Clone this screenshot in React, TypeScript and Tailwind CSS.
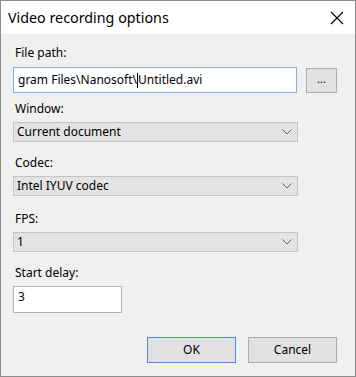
import React from "react";

const font = { fontFamily: '"Noto Sans", "Segoe UI", sans-serif' };

function Chevron() {
  return (
    <svg width="10" height="6" viewBox="0 0 10 6" className="shrink-0">
      <path d="M0.5 0.5 L5 5 L9.5 0.5" fill="none" stroke="#606060" strokeWidth="1" />
    </svg>
  );
}

function Select({ value }: { value: string }) {
  return (
    <div className="w-[285px] h-[20px] bg-[#e3e3e3] border border-[#c4c4c4] flex items-center justify-between pl-[3px] pr-[5px]">
      <span className="text-[12px] leading-[16px] text-black">{value}</span>
      <Chevron />
    </div>
  );
}

export default function App() {
  return (
    <div
      className="w-[356px] h-[377px] border border-[#8c8c8c] flex flex-col bg-[#f0f0f0] text-black"
      style={font}
    >
      <div className="h-[33px] bg-white flex items-center justify-between pl-[7px] pr-[11px] shrink-0">
        <span className="text-[14.3px] leading-[20px]">Video recording options</span>
        <svg width="14" height="14" viewBox="0 0 14 14">
          <path d="M1 1 L13 13 M13 1 L1 13" stroke="#000" strokeWidth="1.1" />
        </svg>
      </div>
      <div className="flex-1 flex flex-col pl-[12px] pr-[18px]">
        <div className="mt-[11px] text-[12px] leading-[16px] pl-[2px]">File path:</div>
        <div className="mt-[6px] flex items-center gap-[9px]">
          <div className="w-[285px] h-[26px] bg-white border border-[#7ab0e5] flex items-center pl-[4px] text-[12px] leading-[16px] whitespace-nowrap overflow-hidden">
            <span>gram Files\Nanosoft\</span>
            <span className="inline-block w-px h-[15px] bg-black" />
            <span>Untitled.avi</span>
          </div>
          <div className="w-[31px] h-[25px] bg-[#e1e1e1] border border-[#adadad] flex items-center justify-center text-[11px] leading-[14px] pb-[2px]">
            ...
          </div>
        </div>
        <div className="mt-[8px] text-[12px] leading-[16px] pl-[2px]">Window:</div>
        <div className="mt-[5px]">
          <Select value="Current document" />
        </div>
        <div className="mt-[13px] text-[12px] leading-[16px] pl-[2px]">Codec:</div>
        <div className="mt-[5px]">
          <Select value="Intel IYUV codec" />
        </div>
        <div className="mt-[15px] text-[12px] leading-[16px] pl-[2px]">FPS:</div>
        <div className="mt-[5px]">
          <Select value="1" />
        </div>
        <div className="mt-[13px] text-[12px] leading-[16px] pl-[2px]">Start delay:</div>
        <div className="mt-[5px] w-[109px] h-[27px] bg-white border border-[#b4b4b4] pl-[4px] pt-[2px] text-[12px] leading-[16px]">
          3
        </div>
        <div className="mt-[24px] flex justify-end gap-[12px]">
          <div className="w-[89px] h-[26px] bg-[#e1e1e1] border border-[#4a90d9] flex items-center justify-center text-[12px] leading-[16px]">
            OK
          </div>
          <div className="w-[89px] h-[26px] bg-[#e1e1e1] border border-[#adadad] flex items-center justify-center text-[12px] leading-[16px]">
            Cancel
          </div>
        </div>
      </div>
    </div>
  );
}
